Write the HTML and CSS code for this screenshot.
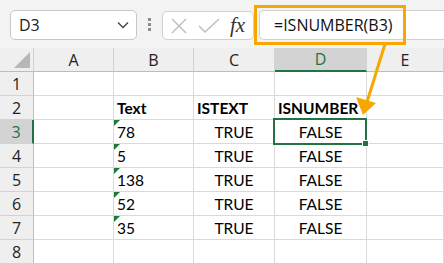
FILE: index.html
```html
<!DOCTYPE html>
<html lang="en">
<head>
    <meta charset="UTF-8">
    <title>ISNUMBER</title>
    <link rel="stylesheet" href="styles.css">
</head>
<body>
    <div class="formula-bar">
        <div class="name-box">
            <span>D3</span>
            <svg class="chevron" width="12" height="8" viewBox="0 0 12 8"><polyline points="1,1.5 6,6.5 11,1.5" fill="none" stroke="#444" stroke-width="1.3"/></svg>
        </div>
        <div class="dots"><i></i><i></i><i></i></div>
        <div class="fx-box">
            <svg width="16" height="16" viewBox="0 0 16 16"><path d="M1 1 L15 15 M15 1 L1 15" stroke="#bdbdbd" stroke-width="1.4"/></svg>
            <svg width="22" height="16" viewBox="0 0 22 16"><polyline points="1,8 7,14 21,1" fill="none" stroke="#bdbdbd" stroke-width="1.4"/></svg>
            <span class="fx">fx</span>
        </div>
        <div class="formula-input">=ISNUMBER(B3)</div>
    </div>

    <div class="sheet">
        <div class="hd corner"></div>
        <div class="hd">A</div>
        <div class="hd">B</div>
        <div class="hd">C</div>
        <div class="hd sel-col">D</div>
        <div class="hd">E</div>

        <div class="rh">1</div><div class="c"></div><div class="c"></div><div class="c"></div><div class="c"></div><div class="c"></div>

        <div class="rh">2</div><div class="c"></div>
        <div class="c bold">Text</div>
        <div class="c bold">ISTEXT</div>
        <div class="c bold">ISNUMBER</div>
        <div class="c"></div>

        <div class="rh sel-row">3</div><div class="c"></div>
        <div class="c flag">78</div>
        <div class="c ctr">TRUE</div>
        <div class="c ctr active">FALSE</div>
        <div class="c"></div>

        <div class="rh">4</div><div class="c"></div>
        <div class="c flag">5</div>
        <div class="c ctr">TRUE</div>
        <div class="c ctr">FALSE</div>
        <div class="c"></div>

        <div class="rh">5</div><div class="c"></div>
        <div class="c flag">138</div>
        <div class="c ctr">TRUE</div>
        <div class="c ctr">FALSE</div>
        <div class="c"></div>

        <div class="rh">6</div><div class="c"></div>
        <div class="c flag">52</div>
        <div class="c ctr">TRUE</div>
        <div class="c ctr">FALSE</div>
        <div class="c"></div>

        <div class="rh">7</div><div class="c"></div>
        <div class="c flag">35</div>
        <div class="c ctr">TRUE</div>
        <div class="c ctr">FALSE</div>
        <div class="c"></div>

        <div class="rh">8</div><div class="c"></div><div class="c"></div><div class="c"></div><div class="c"></div><div class="c"></div>
    </div>

    <!-- callout drawn over the bar and grid -->
    <div class="highlight"></div>
    <svg class="arrow" width="444" height="263" viewBox="0 0 444 263">
        <line x1="385" y1="44" x2="367" y2="102" stroke="#f6a800" stroke-width="3"/>
        <polygon points="356,97 376,103 363,115" fill="#f6a800"/>
    </svg>
</body>
</html>
```

FILE: styles.css
```css
body {
    margin: 0;
    width: 444px;
    height: 263px;
    overflow: hidden;
    position: relative;
    background: #fff;
    font-family: Lato, "Liberation Sans", sans-serif;
}
.formula-bar {
    height: 48px;
    background-color: #f3f3f3;
    display: flex;
    align-items: flex-start;
    padding: 10px 0 0 10px;
    box-sizing: border-box;
}
.name-box {
    width: 127px;
    height: 30px;
    box-sizing: border-box;
    background: #fff;
    border: 1px solid #c8c8c8;
    border-radius: 5px;
    display: flex;
    align-items: center;
    justify-content: space-between;
    padding: 0 7px 0 8px;
    font-family: "Open Sans", sans-serif;
    font-size: 16px;
    color: #222;
}
.dots {
    width: 4px;
    margin: 8px 10px 0 11px;
    display: flex;
    flex-direction: column;
    gap: 2px;
}
.dots i {
    display: block;
    width: 3px;
    height: 3px;
    background: #8c8c8c;
}
.fx-box {
    width: 92px;
    height: 29px;
    margin-top: 1px;
    box-sizing: border-box;
    background: #fff;
    border: 1px solid #d0d0d0;
    border-radius: 5px;
    display: flex;
    align-items: center;
    gap: 11px;
    padding-left: 8px;
}
.fx {
    font-family: "Liberation Serif", serif;
    font-style: italic;
    font-size: 21px;
    color: #333;
    margin-left: -1px;
}
.formula-input {
    flex: 1;
    height: 30px;
    margin-left: 5px;
    box-sizing: border-box;
    background: #fff;
    border: 1px solid #d0d0d0;
    border-right: none;
    border-radius: 5px 0 0 5px;
    padding-left: 14px;
    display: flex;
    align-items: center;
    font-family: "Open Sans", sans-serif;
    font-size: 16px;
    color: #111;
}
.sheet {
    display: grid;
    grid-template-columns: 34px 80px 80px 81px 92px 77px;
    grid-auto-rows: 24px;
}
.hd, .rh, .c {
    box-sizing: border-box;
    border-right: 1px solid #dadada;
    border-bottom: 1px solid #dadada;
    display: flex;
    align-items: center;
}
.hd, .rh {
    background: #efefef;
    justify-content: center;
    font-family: "Open Sans", sans-serif;
    font-size: 16px;
    color: #222;
    border-color: #d2d2d2;
}
.hd {
    border-bottom-color: #bdbdbd;
}
.rh {
    border-right-color: #bdbdbd;
}
.corner {
    position: relative;
}
.corner::after {
    content: "";
    position: absolute;
    right: 3px;
    bottom: 3px;
    border-style: solid;
    border-width: 0 0 16px 16px;
    border-color: transparent transparent #b7b7b7 transparent;
}
.sel-col {
    background: #d3d3d3;
    color: #217346;
    border-bottom: 2px solid #217346;
}
.sel-row {
    background: #d3d3d3;
    color: #217346;
    border-right: 2px solid #217346;
}
.c {
    padding: 1px 0 0 3px;
    font-size: 15.5px;
    color: #000;
}
.bold {
    font-weight: bold;
}
.ctr {
    justify-content: center;
    padding-left: 0;
}
.flag {
    position: relative;
}
.flag::before {
    content: "";
    position: absolute;
    left: 0;
    top: 0;
    border-style: solid;
    border-width: 6px 6px 0 0;
    border-color: #1e7b34 transparent transparent transparent;
}
.active {
    position: relative;
}
.active::after {
    content: "";
    position: absolute;
    left: -2px;
    top: -2px;
    right: -1px;
    bottom: -2px;
    border: 2px solid #217346;
}
.active::before {
    content: "";
    position: absolute;
    right: -3px;
    bottom: -4px;
    width: 5px;
    height: 5px;
    background: #217346;
    border: 1px solid #fff;
    z-index: 1;
}
.highlight {
    position: absolute;
    left: 254px;
    top: 5px;
    width: 152px;
    height: 40px;
    box-sizing: border-box;
    border: 3px solid #f6a800;
}
.arrow {
    position: absolute;
    left: 0;
    top: 0;
}
```
